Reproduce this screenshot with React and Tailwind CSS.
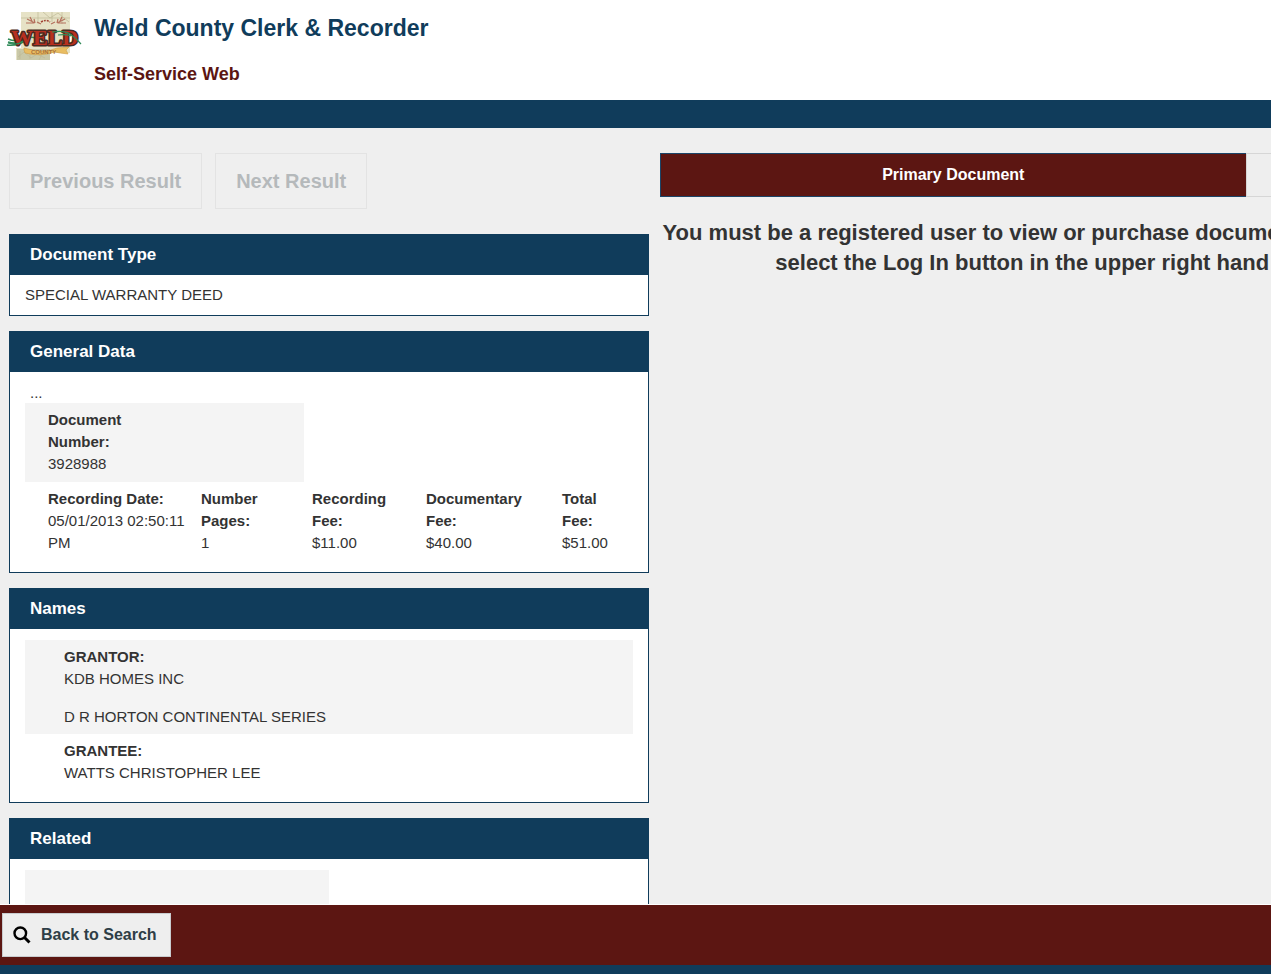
import React from "react";

const details = [
  { label: "Recording Date:", value: "05/01/2013 02:50:11 PM" },
  { label: "Number Pages:", value: "1" },
  { label: "Recording Fee:", value: "$11.00" },
  { label: "Documentary Fee:", value: "$40.00" },
  { label: "Total Fee:", value: "$51.00" },
];

function CountyLogo() {
  return (
    <svg viewBox="0 0 76 50" className="h-[50px] w-[76px] shrink-0" role="img" aria-label="Weld County">
      <path d="M15 0H64V41H44V48H10V36H15Z" fill="#e6e2c6" />
      <path d="M11 37H44V48H11Z" fill="#c9c8a8" />
      <path
        d="M15 6H64M32 0V12M46 0V10M56 0V12M37 0l7 6 8-5 11 9M12 45l6-5 7 6 6-4 8 4M14 39v8M24 38v9M36 42l-3 6"
        fill="none"
        stroke="#bdb995"
        strokeWidth="0.7"
      />
      <path
        d="M21 7l8 4M20 11h8M24 5l2 4M28 7l1 4M31 10l4 2M59 7l-8 4M60 11h-8M56 5l-2 4M52 7l-1 4M49 10l-4 2"
        stroke="#b4705d"
        strokeWidth="1.2"
        fill="none"
      />
      <path d="M35 10q5-3 9 0" stroke="#a34435" strokeWidth="1.6" strokeDasharray="2 1" fill="none" />
      <path d="M18 36q20 6 33 0l12-1-3 3 2 4q-9-1-13-2-15 5-30 1l-1-3Z" fill="#e9bd62" stroke="#cf9c45" strokeWidth="0.6" />
      <path d="M2 30q9 3 16-2t14-1M2 27q10 4 17-2M1 33q10 1 16-3" stroke="#2f8a58" strokeWidth="1.6" fill="none" />
      <text
        x="5"
        y="33"
        fontFamily="Liberation Serif, serif"
        fontWeight="700"
        fontSize="22"
        fill="#b8301f"
        stroke="#4a2a20"
        strokeWidth="3"
        strokeLinejoin="round"
        paintOrder="stroke"
      >
        WELD
      </text>
      <path d="M2 31q9 3 15-2M46 20q12-2 18 2t11 10M52 23q9-1 13 1" stroke="#2f8a58" strokeWidth="1.2" fill="none" />
      <text x="25" y="42" fontFamily="Liberation Sans, sans-serif" fontWeight="700" fontSize="6" fill="#a8703a">
        COUNTY
      </text>
    </svg>
  );
}

function Panel({ title, children }) {
  return (
    <section className="border border-[#103c5b] bg-white">
      <h2 className="bg-[#103c5b] px-5 py-2 text-[17px] leading-6 font-bold text-white">{title}</h2>
      {children}
    </section>
  );
}

export default function App() {
  return (
    <div className="flex h-screen flex-col overflow-hidden bg-[#efefef] font-['Liberation_Sans',Arial,sans-serif] text-[15px] leading-[22px] text-[#333]">
      <header className="flex shrink-0 gap-3 bg-white px-[6px] pt-3 pb-[14px]">
        <CountyLogo />
        <div>
          <h1 className="text-[23px] leading-8 font-bold text-[#103c5b]">Weld County Clerk &amp; Recorder</h1>
          <p className="pt-[18px] text-[18px] leading-6 font-bold text-[#5c1612]">Self-Service Web</p>
        </div>
      </header>
      <div className="h-7 shrink-0 bg-[#103c5b]" />

      <main className="flex min-h-0 flex-1 gap-[11px] overflow-hidden pt-[25px] pl-[9px]">
        <div className="w-[calc(50vw+4px)] shrink-0">
          <nav className="mb-[25px] flex gap-[13px]">
            <button disabled className="h-14 border border-[#e3e3e3] px-5 text-[20px] font-bold text-[#b5b9bb]">
              Previous Result
            </button>
            <button disabled className="h-14 border border-[#e3e3e3] px-5 text-[20px] font-bold text-[#b5b9bb]">
              Next Result
            </button>
          </nav>

          <div className="flex flex-col gap-[15px]">
            <Panel title="Document Type">
              <p className="px-[15px] py-[9px]">SPECIAL WARRANTY DEED</p>
            </Panel>

            <Panel title="General Data">
              <div className="px-[15px] py-[11px]">
                <p className="px-[5px] leading-5">...</p>
                <table className="w-full table-fixed border-collapse text-left align-top">
                  <colgroup>
                    <col className="w-[168px]" />
                    <col className="w-[111px]" />
                    <col className="w-[114px]" />
                    <col className="w-[136px]" />
                    <col />
                  </colgroup>
                  <tbody>
                    <tr>
                      <td colSpan={2} className="bg-[#f4f4f4] pt-[6px] pb-[7px] pl-[23px]">
                        <strong className="block w-24">Document Number:</strong>
                        3928988
                      </td>
                    </tr>
                    <tr>
                      {details.map((d, i) => (
                        <td key={d.label} className={i === 0 ? "pt-[6px] pb-[7px] pl-[23px] align-top" : "pt-[6px] pb-[7px] pl-2 align-top"}>
                          <strong className={i === 0 ? "block" : "block w-min"}>{d.label}</strong>
                          {d.value}
                        </td>
                      ))}
                    </tr>
                  </tbody>
                </table>
              </div>
            </Panel>

            <Panel title="Names">
              <dl className="px-[15px] py-[11px]">
                <div className="bg-[#f4f4f4] px-[39px] py-[6px]">
                  <dt className="font-bold">GRANTOR:</dt>
                  <dd>KDB HOMES INC</dd>
                  <dd className="pt-4">D R HORTON CONTINENTAL SERIES</dd>
                </div>
                <div className="px-[39px] pt-[6px] pb-[7px]">
                  <dt className="font-bold">GRANTEE:</dt>
                  <dd>WATTS CHRISTOPHER LEE</dd>
                </div>
              </dl>
            </Panel>

            <Panel title="Related">
              <div className="px-[15px] py-[11px]">
                <div className="h-20 w-1/2 bg-[#f4f4f4]" />
              </div>
            </Panel>
          </div>
        </div>

        <div className="min-w-0 flex-1 overflow-hidden">
          <div className="w-[192%]">
            <div className="flex h-11">
              <button className="flex-1 border border-r-0 border-[#1b4568] bg-[#5c1612] text-[16px] font-bold text-white">
                Primary Document
              </button>
              <button aria-label="Related documents" className="flex-1 border border-[#d6d6d6] bg-[#eeeeee]" />
            </div>
            <p className="pt-[21px] text-center text-[22px] leading-[30px] font-bold whitespace-nowrap">
              You must be a registered user to view or purchase documents. To log in or to register as a new site user, please
              <br />
              select the Log In button in the upper right hand corner of the screen, and return to search.
            </p>
          </div>
        </div>
      </main>

      <footer className="shrink-0 border-t border-white">
        <div className="bg-[#5c1612] px-[2px] py-2">
          <button className="flex h-11 items-center gap-[10px] border border-[#c9cccf] bg-[#eeeeee] pr-[13px] pl-[10px] text-[16px] font-bold text-[#2f3e46]">
            <svg viewBox="0 0 18 18" className="h-[18px] w-[18px]" fill="none" stroke="#000" aria-hidden="true">
              <circle cx="7.3" cy="7.3" r="5.8" strokeWidth="2.4" />
              <path d="M11.5 11.5L16.5 16.5" strokeWidth="3" />
            </svg>
            Back to Search
          </button>
        </div>
        <div className="h-[9px] bg-[#103c5b]" />
      </footer>
    </div>
  );
}
